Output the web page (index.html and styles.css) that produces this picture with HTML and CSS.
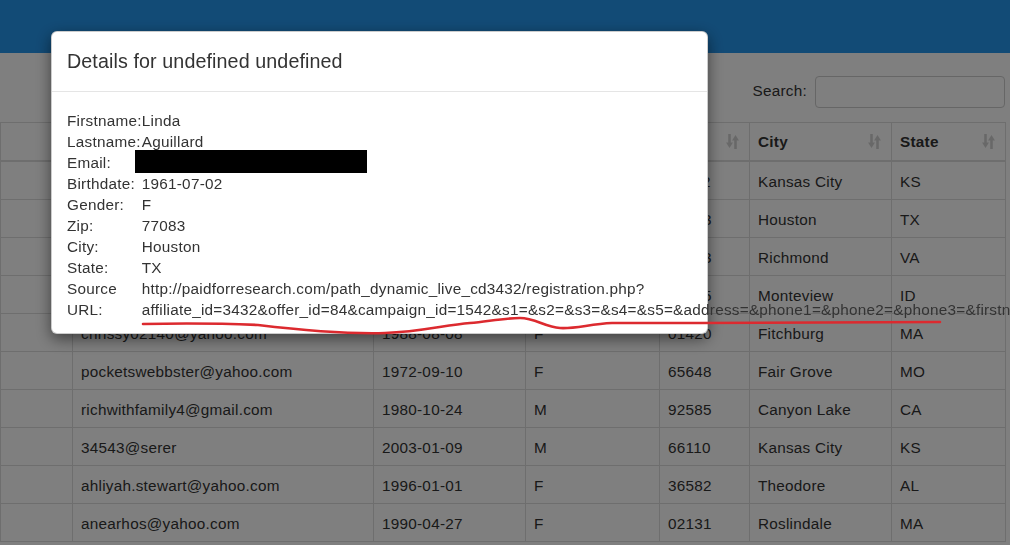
FILE: index.html
```html
<!DOCTYPE html>
<html lang="en">

<head>
    <meta charset="UTF-8">
    <title>Leads</title>
    <link rel="stylesheet" href="styles.css">
</head>

<body>
    <div class="navbar"></div>

    <div class="page">
        <div class="toolbar">
            <label for="search">Search:</label>
            <input type="search" id="search">
        </div>

        <table class="leads">
            <colgroup>
                <col class="c-name">
                <col class="c-email">
                <col class="c-birth">
                <col class="c-gender">
                <col class="c-zip">
                <col class="c-city">
                <col class="c-state">
            </colgroup>
            <thead>
                <tr>
                    <th></th>
                    <th><div class="th-in">Email<svg class="sort" viewBox="0 0 12 14"><rect x="2" y="0" width="2.4" height="9"/><polygon points="0,8 6.4,8 3.2,13"/><rect x="7.6" y="5" width="2.4" height="9"/><polygon points="5.6,6 12,6 8.8,1"/></svg></div></th>
                    <th><div class="th-in">Birthdate<svg class="sort" viewBox="0 0 12 14"><rect x="2" y="0" width="2.4" height="9"/><polygon points="0,8 6.4,8 3.2,13"/><rect x="7.6" y="5" width="2.4" height="9"/><polygon points="5.6,6 12,6 8.8,1"/></svg></div></th>
                    <th><div class="th-in">Gender<svg class="sort" viewBox="0 0 12 14"><rect x="2" y="0" width="2.4" height="9"/><polygon points="0,8 6.4,8 3.2,13"/><rect x="7.6" y="5" width="2.4" height="9"/><polygon points="5.6,6 12,6 8.8,1"/></svg></div></th>
                    <th><div class="th-in">Zip<svg class="sort" viewBox="0 0 12 14"><rect x="2" y="0" width="2.4" height="9"/><polygon points="0,8 6.4,8 3.2,13"/><rect x="7.6" y="5" width="2.4" height="9"/><polygon points="5.6,6 12,6 8.8,1"/></svg></div></th>
                    <th><div class="th-in">City<svg class="sort" viewBox="0 0 12 14"><rect x="2" y="0" width="2.4" height="9"/><polygon points="0,8 6.4,8 3.2,13"/><rect x="7.6" y="5" width="2.4" height="9"/><polygon points="5.6,6 12,6 8.8,1"/></svg></div></th>
                    <th><div class="th-in">State<svg class="sort" viewBox="0 0 12 14"><rect x="2" y="0" width="2.4" height="9"/><polygon points="0,8 6.4,8 3.2,13"/><rect x="7.6" y="5" width="2.4" height="9"/><polygon points="5.6,6 12,6 8.8,1"/></svg></div></th>
                </tr>
            </thead>
            <tbody>
                <tr><td></td><td>kcmarie77@yahoo.com</td><td>1985-03-12</td><td>F</td><td>66112</td><td>Kansas City</td><td>KS</td></tr>
                <tr><td></td><td>laguillard@gmail.com</td><td>1961-07-02</td><td>F</td><td>77083</td><td>Houston</td><td>TX</td></tr>
                <tr><td></td><td>tmoore1958@aol.com</td><td>1958-11-30</td><td>M</td><td>23223</td><td>Richmond</td><td>VA</td></tr>
                <tr><td></td><td>jbradshaw@yahoo.com</td><td>1977-05-14</td><td>M</td><td>83435</td><td>Monteview</td><td>ID</td></tr>
                <tr><td></td><td>chrissy02140@yahoo.com</td><td>1988-08-08</td><td>F</td><td>01420</td><td>Fitchburg</td><td>MA</td></tr>
                <tr><td></td><td>pocketswebbster@yahoo.com</td><td>1972-09-10</td><td>F</td><td>65648</td><td>Fair Grove</td><td>MO</td></tr>
                <tr><td></td><td>richwithfamily4@gmail.com</td><td>1980-10-24</td><td>M</td><td>92585</td><td>Canyon Lake</td><td>CA</td></tr>
                <tr><td></td><td>34543@serer</td><td>2003-01-09</td><td>M</td><td>66110</td><td>Kansas City</td><td>KS</td></tr>
                <tr><td></td><td>ahliyah.stewart@yahoo.com</td><td>1996-01-01</td><td>F</td><td>36582</td><td>Theodore</td><td>AL</td></tr>
                <tr><td></td><td>anearhos@yahoo.com</td><td>1990-04-27</td><td>F</td><td>02131</td><td>Roslindale</td><td>MA</td></tr>
            </tbody>
        </table>
    </div>

    <div class="backdrop"></div>

    <div class="modal">
        <div class="modal-header">
            <h4>Details for undefined undefined</h4>
        </div>
        <div class="modal-body">
            <table class="details">
                <tr><td>Firstname:</td><td>Linda</td></tr>
                <tr><td>Lastname:</td><td>Aguillard</td></tr>
                <tr><td>Email:</td><td><span class="redact"></span></td></tr>
                <tr><td>Birthdate:</td><td>1961-07-02</td></tr>
                <tr><td>Gender:</td><td>F</td></tr>
                <tr><td>Zip:</td><td>77083</td></tr>
                <tr><td>City:</td><td>Houston</td></tr>
                <tr><td>State:</td><td>TX</td></tr>
                <tr>
                    <td>Source<br>URL:</td>
                    <td>http://paidforresearch.com/path_dynamic_live_cd3432/registration.php?<br><span class="nowrap">affiliate_id=3432&amp;offer_id=84&amp;campaign_id=1542&amp;s1=&amp;s2=&amp;s3=&amp;s4=&amp;s5=&amp;address=&amp;phone1=&amp;phone2=&amp;phone3=&amp;firstname=&amp;lastname=</span></td>
                </tr>
            </table>
        </div>
    </div>

    <!-- hand drawn underline on the screenshot -->
    <svg class="scribble" viewBox="0 0 1010 545">
        <path d="M143 324 C190 323 235 324 258 325 C300 330 350 334 385 333 C420 332 445 325 470 323 C490 321 505 318 520 318 C535 318 545 327 560 328 C575 329 590 324 612 323 L700 323 C800 323 880 323 940 322"/>
    </svg>
</body>

</html>
```

FILE: styles.css
```css
body {
    margin: 0;
    font-family: "Liberation Sans", Arial, sans-serif;
    font-size: 15.3px;
    letter-spacing: 0.25px;
    line-height: 21px;
    color: #333;
    background: #fff;
    overflow: hidden;
}

.navbar {
    height: 53px;
    background: #2596ec;
}

.toolbar {
    display: flex;
    justify-content: flex-end;
    align-items: center;
    gap: 8px;
    padding: 23px 5px 14px 0;
}

.toolbar label {
    margin-bottom: 3px;
}

.toolbar input {
    width: 190px;
    height: 32px;
    box-sizing: border-box;
    border: 1px solid #ccc;
    border-radius: 4px;
}

.leads {
    width: 1005px;
    table-layout: fixed;
    border-collapse: collapse;
}

.c-name { width: 72px; }
.c-email { width: 301px; }
.c-birth { width: 152px; }
.c-gender { width: 134px; }
.c-zip { width: 90px; }
.c-city { width: 142px; }
.c-state { width: 114px; }

.leads th,
.leads td {
    border: 1px solid #ddd;
    padding: 8px;
    text-align: left;
    white-space: nowrap;
    overflow: hidden;
}

.leads td {
    padding-top: 9px;
    padding-bottom: 7px;
}

.leads th {
    border-bottom-width: 2px;
    font-weight: bold;
}

.th-in {
    display: flex;
    justify-content: space-between;
    align-items: center;
}

.sort {
    width: 13px;
    height: 15px;
    fill: #333;
    opacity: 0.22;
    margin-right: 2px;
}

.backdrop {
    position: fixed;
    inset: 0;
    background: rgba(0, 0, 0, 0.5);
}

.modal {
    position: fixed;
    left: 51px;
    top: 31px;
    width: 657px;
    box-sizing: border-box;
    background: #fff;
    border: 1px solid rgba(0, 0, 0, 0.2);
    border-radius: 6px;
    box-shadow: 0 5px 15px rgba(0, 0, 0, 0.5);
}

.modal-header {
    padding: 15px;
    border-bottom: 1px solid #e5e5e5;
}

.modal-header h4 {
    margin: 0;
    font-size: 19.7px;
    letter-spacing: 0.1px;
    font-weight: normal;
    line-height: 29px;
}

.modal-body {
    padding: 18px 15px 13px;
}

.details {
    border-spacing: 0;
}

.details td {
    padding: 0;
    vertical-align: top;
}

.redact {
    display: inline-block;
    width: 232px;
    height: 23px;
    margin: -2px 0 0 -7px;
    vertical-align: top;
    background: #000;
}

.nowrap {
    white-space: nowrap;
}

.scribble {
    position: fixed;
    left: 0;
    top: 0;
    width: 1010px;
    height: 545px;
    pointer-events: none;
}

.scribble path {
    fill: none;
    stroke: #dc2a2f;
    stroke-width: 2.6;
    stroke-linecap: round;
}
```
